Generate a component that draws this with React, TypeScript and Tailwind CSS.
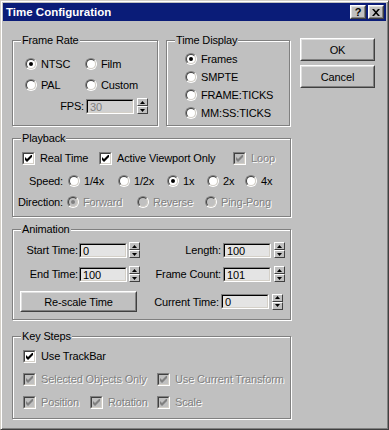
import React from 'react';

const FACE = 'bg-[#c0c0c0]';
const DIS = 'text-[#808080] [text-shadow:1px_1px_0_#fff]';

function Radio({ checked = false, disabled = false }: { checked?: boolean; disabled?: boolean }) {
  return (
    <div className="w-[12px] h-[12px] shrink-0 rounded-full border border-t-[#808080] border-l-[#808080] border-r-white border-b-white">
      <div className={`w-full h-full rounded-full border border-t-[#404040] border-l-[#404040] border-r-[#d4d0c8] border-b-[#d4d0c8] flex items-center justify-center ${disabled ? 'bg-[#c0c0c0]' : 'bg-white'}`}>
        {checked && <div className={`w-[4px] h-[4px] rounded-full ${disabled ? 'bg-[#808080]' : 'bg-black'}`} />}
      </div>
    </div>
  );
}

function Check({ checked = false, disabled = false }: { checked?: boolean; disabled?: boolean }) {
  return (
    <div className="w-[13px] h-[13px] shrink-0 border border-t-[#808080] border-l-[#808080] border-r-white border-b-white">
      <div className={`w-full h-full border border-t-[#404040] border-l-[#404040] border-r-[#d4d0c8] border-b-[#d4d0c8] flex items-center justify-center ${disabled ? 'bg-[#c0c0c0]' : 'bg-white'}`}>
        {checked && (
          <svg width="7" height="7" viewBox="0 0 7 7">
            <path d="M0 2 L2 4 L7 -1 L7 2 L2 7 L0 5 Z" fill={disabled ? '#808080' : '#000'} />
          </svg>
        )}
      </div>
    </div>
  );
}

function RadioItem({ label, checked, disabled, w }: { label: string; checked?: boolean; disabled?: boolean; w?: string }) {
  return (
    <div className={`flex items-center h-[14px] gap-[4px] ${w ?? ''}`}>
      <Radio checked={checked} disabled={disabled} />
      <span className={disabled ? DIS : ''}>{label}</span>
    </div>
  );
}

function CheckItem({ label, checked, disabled, w }: { label: string; checked?: boolean; disabled?: boolean; w?: string }) {
  return (
    <div className={`flex items-center h-[14px] gap-[5px] ${w ?? ''}`}>
      <Check checked={checked} disabled={disabled} />
      <span className={disabled ? DIS : ''}>{label}</span>
    </div>
  );
}

function Edit({ value, disabled }: { value: string; disabled?: boolean }) {
  return (
    <div className="w-[48px] h-[15px] shrink-0 border border-t-[#808080] border-l-[#808080] border-r-white border-b-white">
      <div className={`w-full h-full border border-t-[#000] border-l-[#000] border-r-[#d4d0c8] border-b-[#d4d0c8] pl-[2px] leading-[12px] ${disabled ? 'bg-[#d0d0d0] text-[#808080]' : 'bg-[#e4e4e4]'}`}>
        {value}
      </div>
    </div>
  );
}

function Arrow({ up }: { up?: boolean }) {
  return (
    <svg width="5" height="3" viewBox="0 0 5 3">
      <path d={up ? 'M2.5 0 L5 3 L0 3 Z' : 'M0 0 L5 0 L2.5 3 Z'} fill="#000" />
    </svg>
  );
}

function Spinner() {
  return (
    <div className="w-[11px] h-[16px] shrink-0 flex flex-col">
      <div className="h-[8px] border border-t-white border-l-white border-r-[#404040] border-b-[#404040] flex items-center justify-center">
        <Arrow up />
      </div>
      <div className="h-[8px] border border-t-white border-l-white border-r-[#404040] border-b-[#404040] flex items-center justify-center">
        <Arrow />
      </div>
    </div>
  );
}

function Button({ children, className }: { children: React.ReactNode; className: string }) {
  return (
    <div className={`border border-t-white border-l-white border-r-[#404040] border-b-[#404040] ${className}`}>
      <div className="w-full h-full border border-t-[#dfdfdf] border-l-[#dfdfdf] border-r-[#808080] border-b-[#808080] flex items-center justify-center">
        {children}
      </div>
    </div>
  );
}

function Group({ title, className, children }: { title: string; className: string; children: React.ReactNode }) {
  return (
    <div className={`relative border border-[#808080] shadow-[inset_1px_1px_0_#fff,1px_1px_0_#fff] ${className}`}>
      <span className={`absolute left-[8px] top-[-8px] px-[1px] leading-[14px] ${FACE}`}>{title}</span>
      {children}
    </div>
  );
}

export default function App() {
  return (
    <div className={`w-[389px] h-[430px] ${FACE} border border-t-[#d4d0c8] border-l-[#d4d0c8] border-r-[#404040] border-b-[#404040] shadow-[inset_1px_1px_0_#fff,inset_-1px_-1px_0_#808080] font-['Liberation_Sans',Arial,sans-serif] text-[11px] leading-[14px] tracking-[-0.15px] text-black select-none overflow-hidden`}>
      {/* title bar */}
      <div className="mx-[2px] mt-[2px] h-[18px] bg-[#0a1c78] flex items-center pl-[3px] pr-[2px]">
        <span className="text-white font-bold text-[11.5px] tracking-normal flex-1">Time Configuration</span>
        <Button className="w-[16px] h-[14px] bg-[#c0c0c0]">
          <span className="font-bold text-[11px] leading-[10px]">?</span>
        </Button>
        <Button className="w-[16px] h-[14px] bg-[#c0c0c0] ml-[2px]">
          <svg width="8" height="7" viewBox="0 0 8 7">
            <path d="M0 0 L2 0 L4 2.2 L6 0 L8 0 L5 3.5 L8 7 L6 7 L4 4.8 L2 7 L0 7 L3 3.5 Z" fill="#000" />
          </svg>
        </Button>
      </div>

      <div className="flex pl-[11px]">
        <div className="w-[279px] mt-[19px] flex flex-col">
          <div className="flex">
            <Group title="Frame Rate" className="w-[146px] h-[86px]">
              <div className="pl-[12px] pt-[16px]">
                <div className="flex">
                  <RadioItem label="NTSC" checked w="w-[60px]" />
                  <RadioItem label="Film" />
                </div>
                <div className="flex mt-[7px]">
                  <RadioItem label="PAL" w="w-[60px]" />
                  <RadioItem label="Custom" />
                </div>
              </div>
              <div className="flex items-center h-[16px] mt-[6px] pl-[47px]">
                <span className="w-[24px] text-right">FPS:</span>
                <div className="ml-[2px]"><Edit value="30" disabled /></div>
                <div className="ml-[3px]"><Spinner /></div>
              </div>
            </Group>
            <Group title="Time Display" className="w-[124px] h-[86px] ml-[8px]">
              <div className="pl-[18px] pt-[11px] flex flex-col gap-[4px]">
                <RadioItem label="Frames" checked />
                <RadioItem label="SMPTE" />
                <RadioItem label="FRAME:TICKS" />
                <RadioItem label="MM:SS:TICKS" />
              </div>
            </Group>
          </div>

          <Group title="Playback" className="h-[79px] mt-[12px]">
            <div className="flex pl-[9px] pt-[12px]">
              <CheckItem label="Real Time" checked w="w-[77px]" />
              <CheckItem label="Active Viewport Only" checked w="w-[134px]" />
              <CheckItem label="Loop" checked disabled />
            </div>
            <div className="flex items-center mt-[9px]">
              <span className="w-[50px] text-right">Speed:</span>
              <div className="flex ml-[5px]">
                <RadioItem label="1/4x" w="w-[50px]" />
                <RadioItem label="1/2x" w="w-[49px]" />
                <RadioItem label="1x" checked w="w-[40px]" />
                <RadioItem label="2x" w="w-[38px]" />
                <RadioItem label="4x" />
              </div>
            </div>
            <div className="flex items-center mt-[7px]">
              <span className="w-[50px] text-right">Direction:</span>
              <div className="flex ml-[4px]">
                <RadioItem label="Forward" checked disabled w="w-[70px]" />
                <RadioItem label="Reverse" disabled w="w-[68px]" />
                <RadioItem label="Ping-Pong" disabled />
              </div>
            </div>
          </Group>

          <Group title="Animation" className="h-[91px] mt-[12px]">
            <div className="flex items-center h-[16px] mt-[12px]">
              <span className="w-[65px] text-right">Start Time:</span>
              <div className="ml-[1px]"><Edit value="0" /></div>
              <div className="ml-[2px]"><Spinner /></div>
              <span className="w-[81px] text-right">Length:</span>
              <div className="ml-[2px]"><Edit value="100" /></div>
              <div className="ml-[3px]"><Spinner /></div>
            </div>
            <div className="flex items-center h-[16px] mt-[8px]">
              <span className="w-[65px] text-right">End Time:</span>
              <div className="ml-[1px]"><Edit value="100" /></div>
              <div className="ml-[2px]"><Spinner /></div>
              <span className="w-[81px] text-right">Frame Count:</span>
              <div className="ml-[2px]"><Edit value="101" /></div>
              <div className="ml-[3px]"><Spinner /></div>
            </div>
            <div className="flex items-center h-[21px] mt-[9px]">
              <Button className="w-[117px] h-[21px] ml-[7px]">Re-scale Time</Button>
              <span className="w-[82px] text-right">Current Time:</span>
              <div className="ml-[2px]"><Edit value="0" /></div>
              <div className="ml-[3px]"><Spinner /></div>
            </div>
          </Group>

          <Group title="Key Steps" className="h-[83px] mt-[16px]">
            <div className="pl-[10px] pt-[12px] flex flex-col gap-[9px]">
              <CheckItem label="Use TrackBar" checked />
              <div className="flex">
                <CheckItem label="Selected Objects Only" checked disabled w="w-[134px]" />
                <CheckItem label="Use Current Transform" checked disabled />
              </div>
              <div className="flex">
                <CheckItem label="Position" checked disabled w="w-[67px]" />
                <CheckItem label="Rotation" checked disabled w="w-[67px]" />
                <CheckItem label="Scale" checked disabled />
              </div>
            </div>
          </Group>
        </div>

        <div className="ml-[9px] mt-[17px] flex flex-col gap-[4px]">
          <Button className="w-[75px] h-[23px]">OK</Button>
          <Button className="w-[75px] h-[23px]">Cancel</Button>
        </div>
      </div>
    </div>
  );
}
